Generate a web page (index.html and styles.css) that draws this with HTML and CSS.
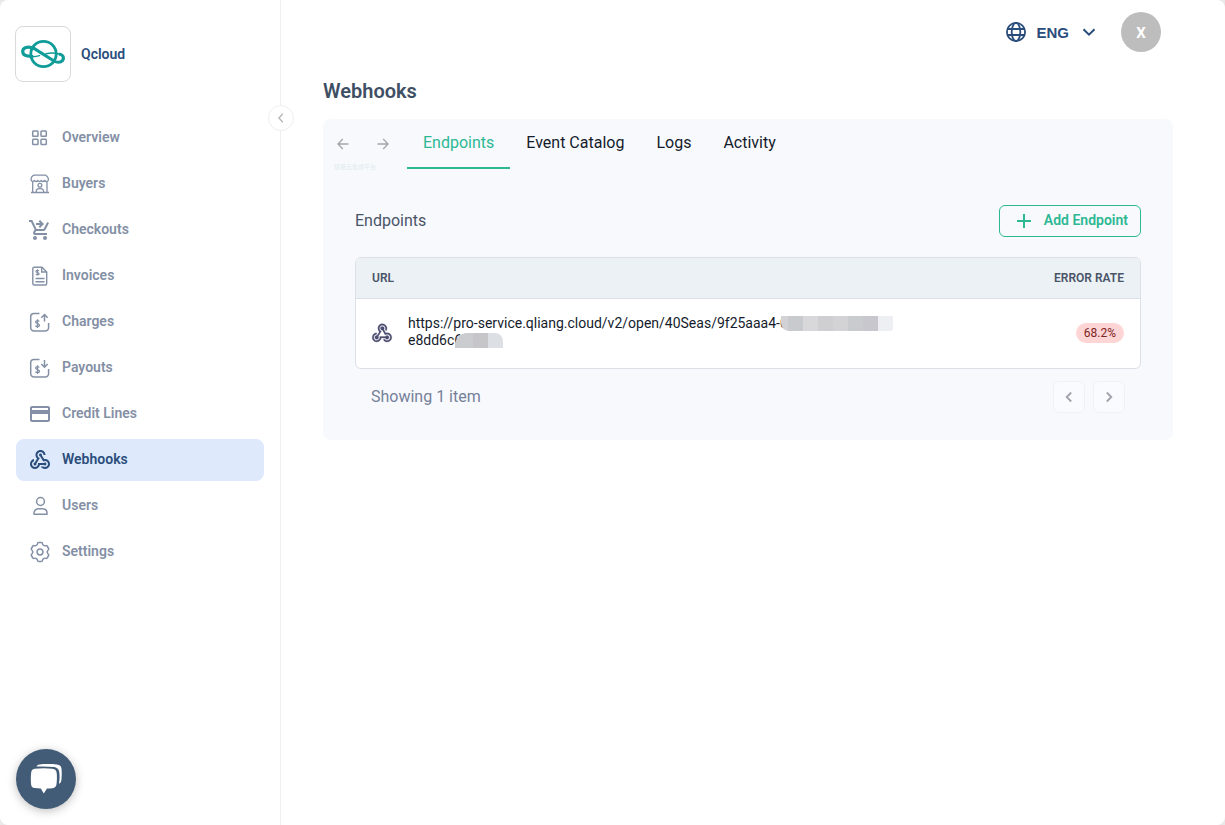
FILE: index.html
```html
<!DOCTYPE html>
<html lang="en">
<head>
<meta charset="utf-8">
<title>Webhooks</title>
<link rel="stylesheet" href="styles.css">
</head>
<body>
<div class="app">
  <aside class="sidebar">
    <div class="brand">
      <div class="brand-logo">
        <svg width="56" height="56" viewBox="0 0 56 56" fill="none" stroke="#109c99" stroke-width="2.800" stroke-linecap="round">
          <circle cx="28.500" cy="28" r="12.700"/>
          <path d="M17 30.300c-4.500.1-9-1-9.300-4.500-.3-4 5-6.400 11.300-3.300L39 35c2.500 1.500 6.500 1.900 8.500-.6 2-2.600.6-5.400-2.500-6.100" stroke-width="3.200"/>
          <path d="M16 30.600c3.300.3 6-.2 8.500-1M31 27.700c5-.9 10-.7 14 .6" stroke-width="1.500"/>
        </svg>
      </div>
      <span class="brand-name">Qcloud</span>
    </div>
    <button class="collapse" type="button" aria-label="Collapse sidebar">
      <svg width="12" height="12" viewBox="0 0 12 12" fill="none" stroke="#b4b4b4" stroke-width="1.300"><path d="M7.800 1.800 4 6l3.800 4.200"/></svg>
    </button>
    <nav class="nav">
      <a class="nav-item" href="#">
        <svg class="icon" viewBox="0 0 24 24" fill="none" stroke="currentColor" stroke-width="1.500"><rect x="4.700" y="4.900" width="5.300" height="5.300" rx=".8"/><rect x="13" y="4.900" width="5.300" height="5.300" rx=".8"/><rect x="4.700" y="13.200" width="5.300" height="5.300" rx=".8"/><rect x="13" y="13.200" width="5.300" height="5.300" rx=".8"/></svg>
        <span>Overview</span></a>
      <a class="nav-item" href="#">
        <svg class="icon" viewBox="0 0 24 24" fill="none" stroke="currentColor" stroke-width="1.300"><path d="M6 3.200h11.600c1.800 1 3 3.200 2.700 5.300-.9 1.300-2.700 1.300-3.700 0-1.200 1.300-2.500 1.300-3.500 0-.9 1.300-2.300 1.300-3.200 0-1 1.300-2.400 1.300-3.300 0-1.100 1.200-2.500 1-3.400 0C2.900 6.300 4 4 6 3.200zM4.700 9.700v10.500M19 9.700v10.500M3 20.500h18"/><circle cx="11.900" cy="13.200" r="1.900"/><path d="M8.200 20v-.6c0-3.700 7.400-3.700 7.400 0v.6"/></svg>
        <span>Buyers</span></a>
      <a class="nav-item" href="#">
        <svg class="icon" viewBox="0 0 24 24" fill="currentColor"><path d="M7 18c-1.100 0-1.990.9-1.990 2S5.900 22 7 22s2-.9 2-2-.9-2-2-2zM17 18c-1.100 0-1.990.9-1.990 2s.89 2 1.990 2 2-.9 2-2-.9-2-2-2zM8.100 13h7.450c.75 0 1.410-.41 1.750-1.030L21 4.960 19.250 4l-3.700 7H8.530L4.270 2H1v2h2l3.600 7.590-1.350 2.440C4.520 15.370 5.480 17 7 17h12v-2H7l1.100-2zM12 2l4 4-4 4-1.410-1.410L12.170 7H8V5h4.170l-1.590-1.590L12 2z"/></svg>
        <span>Checkouts</span></a>
      <a class="nav-item" href="#">
        <svg class="icon" viewBox="0 0 24 24" fill="none" stroke="currentColor" stroke-width="1.400"><path d="M14 3.300H6.300c-.9 0-1.500.6-1.500 1.500v14.700c0 .9.600 1.500 1.500 1.500h10.900c.9 0 1.500-.6 1.500-1.500V8z"/><path d="M13.700 3.500V8h4.800"/><path d="M7.500 14.500h9M7.500 17.700h9"/><path d="M11 7c-.7-1-3-.9-3 .4 0 1.500 3.100.8 3.100 2.400 0 1.400-2.500 1.400-3.200.4M9.500 5.300v6.300" stroke-width="1.200"/></svg>
        <span>Invoices</span></a>
      <a class="nav-item" href="#">
        <svg class="icon" viewBox="0 0 24 24" fill="none" stroke="currentColor" stroke-width="1.500"><path d="M11.500 3.500H6A3.300 3.300 0 0 0 2.700 6.800v10.900A3.300 3.300 0 0 0 6 21h11.300a3.300 3.300 0 0 0 3.300-3.300V13"/><path d="M16.500 11.500V4.800M13.300 7.700l3.200-3.200 3.200 3.200"/><path d="M11.200 11.500c-.8-1.300-3.600-1.100-3.600.6 0 2 3.900 1.100 3.900 3.100 0 1.800-3.200 1.800-4 .4M9.500 9.300v8.700" stroke-width="1.300"/></svg>
        <span>Charges</span></a>
      <a class="nav-item" href="#">
        <svg class="icon" viewBox="0 0 24 24" fill="none" stroke="currentColor" stroke-width="1.500"><path d="M11.500 3.500H6A3.300 3.300 0 0 0 2.700 6.800v10.900A3.300 3.300 0 0 0 6 21h11.300a3.300 3.300 0 0 0 3.300-3.300V13"/><path d="M16.500 4v6.800M13.300 8l3.200 3.200L19.700 8"/><path d="M11.200 11.500c-.8-1.300-3.600-1.100-3.600.6 0 2 3.900 1.100 3.900 3.100 0 1.800-3.200 1.800-4 .4M9.500 9.300v8.700" stroke-width="1.300"/></svg>
        <span>Payouts</span></a>
      <a class="nav-item" href="#">
        <svg class="icon" viewBox="0 0 24 24" fill="currentColor"><path d="M20 4H4c-1.110 0-1.990.89-1.990 2L2 18c0 1.110.89 2 2 2h16c1.110 0 2-.89 2-2V6c0-1.110-.89-2-2-2zm0 14H4v-6h16v6zm0-10H4V6h16v2z"/></svg>
        <span>Credit Lines</span></a>
      <a class="nav-item active" href="#" aria-current="page">
        <svg class="icon" viewBox="0 0 24 24" fill="currentColor"><path d="M10 15h5.880c.27-.31.67-.5 1.120-.5.83 0 1.500.67 1.500 1.500s-.67 1.500-1.500 1.500c-.44 0-.84-.19-1.120-.5H11.900c-.46 2.280-2.480 4-4.900 4-2.760 0-5-2.240-5-5 0-2.420 1.720-4.440 4-4.900v2.070c-1.160.41-2 1.530-2 2.830 0 1.650 1.350 3 3 3s3-1.350 3-3v-1zm2.500-11c1.650 0 3 1.350 3 3h2c0-2.760-2.240-5-5-5s-5 2.240-5 5c0 1.430.6 2.710 1.550 3.620l-2.350 3.900c-.68.14-1.200.75-1.200 1.480 0 .83.67 1.500 1.500 1.500s1.500-.67 1.500-1.500c0-.16-.02-.31-.07-.45l3.380-5.630C10.490 9.610 9.500 8.420 9.500 7c0-1.650 1.350-3 3-3zm4.500 9c-.64 0-1.230.2-1.720.54l-3.050-5.070C11.530 8.350 11 7.740 11 7c0-.83.67-1.500 1.500-1.500S14 6.170 14 7c0 .15-.02.29-.06.43l2.190 3.650c.28-.05.57-.08.87-.08 2.760 0 5 2.240 5 5s-2.240 5-5 5c-1.850 0-3.470-1.010-4.330-2.500h2.670c.48.32 1.050.5 1.660.5 1.650 0 3-1.350 3-3s-1.350-3-3-3z"/></svg>
        <span>Webhooks</span></a>
      <a class="nav-item" href="#">
        <svg class="icon" viewBox="0 0 24 24" fill="none" stroke="currentColor" stroke-width="1.500"><circle cx="12.500" cy="7.500" r="3.900"/><path d="M6 20.300v-1.200c0-3 2.200-4.300 4.800-4.300h3.400c2.600 0 4.800 1.300 4.800 4.300v1.200z" stroke-linejoin="round"/></svg>
        <span>Users</span></a>
      <a class="nav-item" href="#">
        <svg class="icon" viewBox="0 0 24 24" fill="none" stroke="currentColor" stroke-width="1.500" stroke-linejoin="round"><path d="M10.500 2.600h3c.5 0 .8.300.9.800.3 1.900 1.800 2.800 3.500 2.200.5-.2.900 0 1.200.4l1.500 2.500c.3.500.1.900-.2 1.200-1.500 1.300-1.500 3.300 0 4.600.3.300.5.700.2 1.200l-1.500 2.500c-.3.400-.7.600-1.200.4-1.700-.6-3.200.3-3.500 2.200-.1.500-.4.800-.9.800h-3c-.5 0-.8-.3-.9-.8-.3-1.900-1.800-2.800-3.500-2.200-.5.200-.9 0-1.200-.4l-1.500-2.500c-.3-.5-.1-.9.2-1.200 1.500-1.300 1.500-3.300 0-4.600-.3-.3-.5-.7-.2-1.200L4.900 6c.3-.4.7-.6 1.200-.4 1.700.6 3.200-.3 3.500-2.200.1-.5.400-.8.900-.8z"/><circle cx="12" cy="12" r="2.900"/></svg>
        <span>Settings</span></a>
    </nav>
  </aside>

  <main class="main">
    <header class="topbar">
      <button class="language" type="button">
        <svg class="icon" viewBox="0 0 24 24" fill="none" stroke="currentColor" stroke-width="1.800"><circle cx="12" cy="12" r="9.100"/><ellipse cx="12" cy="12" rx="4.300" ry="9.100"/><path d="M3.500 9h17M3.500 15h17"/></svg>
        <span>ENG</span>
        <svg class="icon" viewBox="0 0 24 24" fill="none" stroke="currentColor" stroke-width="2"><path d="M6.500 9.200 12 14.700l5.500-5.500"/></svg>
      </button>
      <button class="avatar" type="button">X</button>
    </header>

    <h1 class="title">Webhooks</h1>

    <section class="panel">
      <div class="tabbar">
        <div class="history">
          <button class="history-button" type="button" aria-label="Back"><svg width="12" height="12" viewBox="0 0 12 12" fill="none" stroke="currentColor" stroke-width="1.300"><path d="M11.500 6H1M5.800 1 1 6l4.800 5"/></svg></button>
          <button class="history-button" type="button" aria-label="Forward"><svg width="12" height="12" viewBox="0 0 12 12" fill="none" stroke="currentColor" stroke-width="1.300"><path d="M.5 6H11M6.200 1 11 6l-4.800 5"/></svg></button>
          <span class="watermark">轻易云集成平台</span>
        </div>
        <div class="tabs" role="tablist">
          <button class="tab selected" type="button" role="tab" aria-selected="true">Endpoints</button>
          <button class="tab" type="button" role="tab">Event Catalog</button>
          <button class="tab" type="button" role="tab">Logs</button>
          <button class="tab" type="button" role="tab">Activity</button>
        </div>
      </div>

      <div class="panel-body">
        <div class="section-head">
          <h2 class="section-title">Endpoints</h2>
          <button class="add" type="button">
            <svg width="16" height="16" viewBox="0 0 16 16" stroke="currentColor" stroke-width="2"><path d="M8 1v14M1 8h14"/></svg>
            <span>Add Endpoint</span>
          </button>
        </div>

        <table class="endpoints">
          <thead><tr><th>URL</th><th class="rate">ERROR RATE</th></tr></thead>
          <tbody>
            <tr>
              <td>
                <div class="endpoint">
                  <svg class="icon" viewBox="0 0 24 24" fill="currentColor" stroke="currentColor" stroke-width=".3"><path d="M10.460,19C9,21.070 6.150,21.590 4.090,20.150C2.040,18.710 1.560,15.840 3,13.750C3.870,12.500 5.210,11.830 6.580,11.770L6.630,13.200C5.720,13.270 4.840,13.740 4.270,14.560C3.270,16 3.580,17.940 4.950,18.910C6.330,19.870 8.260,19.500 9.260,18.070C9.570,17.620 9.750,17.130 9.820,16.630V15.620L15.400,15.580L15.470,15.470C16,14.550 17.150,14.230 18.050,14.750C18.950,15.270 19.260,16.430 18.730,17.350C18.200,18.260 17.040,18.580 16.140,18.060C15.730,17.830 15.440,17.460 15.310,17.040L11.240,17.060C11.130,17.730 10.870,18.380 10.460,19M17.740,11.860C20.270,12.170 22.070,14.440 21.760,16.930C21.450,19.430 19.150,21.200 16.620,20.890C15.130,20.710 13.900,19.860 13.190,18.680L14.430,17.960C14.920,18.730 15.750,19.280 16.750,19.410C18.500,19.620 20.050,18.430 20.260,16.760C20.470,15.090 19.230,13.560 17.500,13.350C16.960,13.290 16.440,13.360 15.970,13.530L15.120,13.970L12.540,9.200H12.320C11.260,9.160 10.410,8.290 10.440,7.250C10.470,6.210 11.400,5.400 12.450,5.440C13.500,5.500 14.330,6.350 14.300,7.390C14.280,7.830 14.110,8.230 13.840,8.540L15.740,12.050C16.360,11.850 17.040,11.780 17.740,11.860M8.250,9.140C7.250,6.790 8.310,4.100 10.620,3.120C12.940,2.140 15.620,3.250 16.620,5.600C17.210,6.970 17.090,8.470 16.420,9.670L15.180,8.950C15.600,8.140 15.670,7.150 15.270,6.220C14.590,4.620 12.780,3.850 11.230,4.500C9.670,5.160 8.970,7 9.650,8.600C9.930,9.260 10.400,9.770 10.970,10.110L11.360,10.320L8.290,15.310C8.320,15.360 8.360,15.420 8.390,15.500C8.880,16.410 8.540,17.560 7.620,18.050C6.710,18.540 5.560,18.180 5.060,17.240C4.570,16.310 4.910,15.160 5.830,14.670C6.220,14.460 6.650,14.410 7.060,14.500L9.370,10.730C8.900,10.300 8.500,9.760 8.250,9.140Z"/></svg>
                  <div class="url">
                    <div class="url-line">https://pro-service.qliang.cloud/v2/open/40Seas/9f25aaa4-0<span class="mask mask-long"></span></div>
                    <div class="url-line">e8dd6c6<span class="mask mask-short"></span></div>
                  </div>
                </div>
              </td>
              <td class="rate"><span class="badge">68.2%</span></td>
            </tr>
          </tbody>
        </table>

        <div class="table-foot">
          <span>Showing 1 item</span>
          <div class="pager">
            <button class="page-button" type="button" aria-label="Previous page"><svg width="12" height="12" viewBox="0 0 12 12" fill="none" stroke="currentColor" stroke-width="1.800"><path d="M8.200 1.500 3.700 6l4.500 4.500"/></svg></button>
            <button class="page-button" type="button" aria-label="Next page"><svg width="12" height="12" viewBox="0 0 12 12" fill="none" stroke="currentColor" stroke-width="1.800"><path d="M3.800 1.500 8.300 6l-4.500 4.500"/></svg></button>
          </div>
        </div>
      </div>
    </section>
  </main>
  <button class="chat" type="button" aria-label="Open chat">
    <svg width="60" height="60" viewBox="0 0 60 60" fill="#fff"><path d="M18.500 19.700c6-.7 12.500-.7 18 0 2.500.3 4 1.800 4.200 4.300.4 3.700.3 7.800-.2 11.300-.3 2.300-1.700 3.600-4 3.900-1.800.2-3.700.4-5.500.4L27.800 44.500l-3-4.900c-2-.1-4.200-.2-6.300-.5-2-.3-3.200-1.500-3.400-3.700-.4-3.800-.4-8 .1-11.800.3-2.300 1.200-3.600 3.300-3.900z"/><path d="M20.500 17.500c.5-1.200 1.500-1.900 3-2 5.700-.6 11.700-.5 17.500 0 2.700.3 4.200 1.500 4.500 4 .4 4 .3 8-.1 11.500-.2 2-1.100 3.200-2.500 3.700.8-4 .9-8 .3-12-.5-2.800-2.500-4.400-5.200-4.700-5.500-.6-11.500-.7-17.500-.5z"/></svg>
  </button>
</div>
</body>
</html>
```

FILE: styles.css
```css
* { box-sizing: border-box; }

body {
  margin: 0;
  background: #e9e9e9;
  font-family: Roboto, "Liberation Sans", sans-serif;
  font-size: 14px;
}

button {
  padding: 0;
  border: 0;
  background: none;
  font: inherit;
  color: inherit;
  cursor: pointer;
}

svg { display: block; flex: none; }
.icon { width: 24px; height: 24px; }

.app {
  position: relative;
  display: flex;
  min-height: 100vh;
  background: #fff;
  border-radius: 8px;
}

/* Sidebar */
.sidebar {
  position: relative;
  flex: none;
  width: 281px;
  padding: 26px 16px 16px 15px;
  border-right: 1px solid #efefef;
}

.brand {
  display: flex;
  align-items: center;
  gap: 10px;
  margin-bottom: 35px;
}

.brand-logo {
  width: 56px;
  height: 56px;
  border: 1px solid #d9d9d9;
  border-radius: 8px;
}

.brand-logo svg { margin: -1px; }

.brand-name {
  color: #2a4d7b;
  font-weight: 600;
}

.collapse {
  position: absolute;
  top: 105px;
  right: -14px;
  display: grid;
  place-items: center;
  width: 26px;
  height: 26px;
  border: 1px solid #efefef;
  border-radius: 50%;
  background: #fff;
}

.nav {
  display: flex;
  flex-direction: column;
  gap: 4px;
  margin-left: 1px;
}

.nav-item {
  display: flex;
  align-items: center;
  gap: 10px;
  height: 42px;
  padding: 0 12px;
  border-radius: 8px;
  color: #8490a5;
  font-weight: 600;
  text-decoration: none;
}

.nav-item span { padding-bottom: 2px; }

.nav-item.active {
  background: #deeafc;
  color: #2a4d7b;
}

/* Main column */
.main {
  flex: 1;
  min-width: 0;
  padding: 0 52px 32px 42px;
}

.topbar {
  display: flex;
  align-items: center;
  justify-content: flex-end;
  gap: 20px;
  height: 64px;
  padding-right: 12px;
}

.language {
  display: flex;
  align-items: center;
  gap: 8px;
  color: #2a4d7b;
  font-family: "Liberation Sans", Arial, sans-serif;
  font-size: 15px;
  font-weight: 700;
}

.avatar {
  width: 40px;
  height: 40px;
  padding-top: 2px;
  border-radius: 50%;
  background: #bdbdbd;
  color: #fff;
  font-size: 15px;
  font-weight: 700;
}

.title {
  margin: 15px 0 16px;
  color: #3f4f63;
  font-size: 20px;
  font-weight: 600;
  line-height: 24px;
}

.panel {
  border-radius: 8px;
  background: #f8f9fd;
}

.tabbar {
  display: flex;
  gap: 4px;
}

.history {
  position: relative;
  display: flex;
  height: 50px;
}

.history-button {
  display: grid;
  place-items: center;
  width: 40px;
  color: #a5a5a9;
}

.watermark {
  position: absolute;
  left: 11px;
  top: 43px;
  color: #dcebed;
  font-family: "Noto Sans CJK SC", sans-serif;
  font-size: 6px;
  line-height: 9px;
  white-space: nowrap;
}

.tabs { display: flex; }

.tab {
  height: 50px;
  padding: 0 16px 2px;
  border-bottom: 2px solid transparent;
  color: #141c2c;
  font-size: 16px;
}

.tab.selected {
  border-color: #2cb893;
  color: #2cb893;
}

.panel-body { padding: 36px 32px 27px; }

.section-head {
  display: flex;
  align-items: center;
  justify-content: space-between;
  margin-bottom: 20px;
}

.section-title {
  margin: 0;
  padding-bottom: 2px;
  color: #4a5468;
  font-size: 16px;
  font-weight: 400;
}

.add {
  display: flex;
  align-items: center;
  gap: 12px;
  height: 32px;
  padding: 0 12px 0 16px;
  border: 1px solid #2cb893;
  border-radius: 6px;
  color: #2cb893;
  font-weight: 600;
}

.add span { padding-bottom: 2px; }

/* Endpoint table */
.endpoints {
  width: 100%;
  border: 1px solid #dddfe9;
  border-radius: 6px;
  border-spacing: 0;
  overflow: hidden;
  background: #fff;
}

.endpoints th {
  height: 41px;
  padding: 0 16px;
  border-bottom: 1px solid #dddfe9;
  background: #ecf1f5;
  color: #4a5468;
  font-size: 12px;
  font-weight: 600;
  text-align: left;
}

.endpoints td {
  height: 69px;
  padding: 0 16px 2px;
}

.endpoints .rate { text-align: right; }

.endpoint {
  display: flex;
  align-items: center;
  gap: 14px;
  margin-left: -2px;
  color: #4a4c70;
}

.url {
  padding-bottom: 2px;
  color: #141c2c;
}

.url-line {
  display: flex;
  align-items: center;
  height: 17px;
  white-space: nowrap;
}

.mask { height: 15px; }

.mask-long {
  width: 112px;
  margin-left: -7px;
  border-radius: 0 0 2px 8px;
  background: linear-gradient(90deg, #d2d2d6 0 7px, #c9cace 7px 22px, #d8d8da 22px 37px, #cfcfd2 37px 52px, #d3d3d6 52px 67px, #cacbce 67px 82px, #c7c7cd 82px 97px, #eeeff2 97px);
}

.mask-short {
  width: 48px;
  margin-left: -7px;
  border-radius: 12px 8px 0 0;
  background: linear-gradient(90deg, #cbccd0 0 18px, #c6c6c9 18px 33px, #dce0e4 33px);
}

.badge {
  display: inline-block;
  padding: 0 8px;
  border-radius: 10px;
  background: #fed5d5;
  color: #7e2424;
  font-size: 12px;
  line-height: 20px;
}

.table-foot {
  display: flex;
  align-items: center;
  justify-content: space-between;
  padding: 12px 16px 0;
  color: #75809a;
  font-size: 16px;
}

.table-foot > span { padding-bottom: 2px; }

.pager {
  display: flex;
  gap: 8px;
}

.page-button {
  display: grid;
  place-items: center;
  width: 32px;
  height: 32px;
  border: 1px solid #f0f1f8;
  border-radius: 6px;
  background: #fafbfe;
  color: #a0a1ab;
}

.chat {
  position: fixed;
  left: 16px;
  bottom: 16px;
  width: 60px;
  height: 60px;
  border-radius: 50%;
  background: #425b76;
  box-shadow: 0 2px 10px rgba(0, 0, 0, 0.25);
}
```
